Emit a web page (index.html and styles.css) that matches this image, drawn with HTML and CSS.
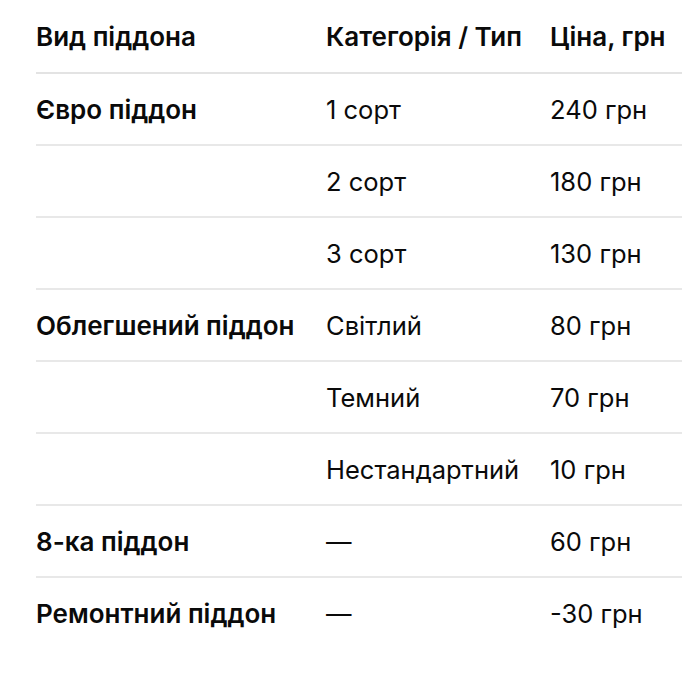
FILE: index.html
```html
<!DOCTYPE html>
<html lang="uk">
<head>
<meta charset="utf-8">
<link rel="stylesheet" href="styles.css">
</head>
<body>
<table class="prices">
  <thead>
    <tr><th class="c1">Вид піддона</th><th class="c2">Категорія / Тип</th><th class="c3">Ціна, грн</th></tr>
  </thead>
  <tbody>
    <tr><td class="c1 kind">Євро піддон</td><td class="c2">1 сорт</td><td class="c3">240 грн</td></tr>
    <tr><td class="c1 kind"></td><td class="c2">2 сорт</td><td class="c3">180 грн</td></tr>
    <tr><td class="c1 kind"></td><td class="c2">3 сорт</td><td class="c3">130 грн</td></tr>
    <tr><td class="c1 kind">Облегшений піддон</td><td class="c2">Світлий</td><td class="c3">80 грн</td></tr>
    <tr><td class="c1 kind"></td><td class="c2">Темний</td><td class="c3">70 грн</td></tr>
    <tr><td class="c1 kind"></td><td class="c2">Нестандартний</td><td class="c3">10 грн</td></tr>
    <tr><td class="c1 kind">8-ка піддон</td><td class="c2">—</td><td class="c3">60 грн</td></tr>
    <tr><td class="c1 kind">Ремонтний піддон</td><td class="c2">—</td><td class="c3">-30 грн</td></tr>
  </tbody>
</table>
</body>
</html>
```
FILE: styles.css
```css
html, body {
  margin: 0;
  padding: 0;
  background: #fff;
}
body {
  font-family: Inter, "Noto Sans", "Liberation Sans", sans-serif;
  color: #0a0a0a;
  padding: 0 8px 0 36px;
}
.prices {
  border-collapse: collapse;
  table-layout: fixed;
  width: 646px;
  font-size: 25.5px;
}
.prices th, .prices td {
  text-align: left;
  padding: 0;
  white-space: nowrap;
  vertical-align: middle;
}
.prices th {
  font-weight: 600;
  font-size: 26px;
  height: 72px;
  border-bottom: 2px solid #e3e3e3;
}
.prices td {
  font-weight: 400;
  height: 70px;
  border-bottom: 2px solid #e8e8e8;
}
.prices tbody tr:last-child td {
  border-bottom: none;
}
.prices td.kind {
  font-weight: 600;
  font-size: 26px;
}
.c1 { width: 290px; }
.c2 { width: 224px; }
```
